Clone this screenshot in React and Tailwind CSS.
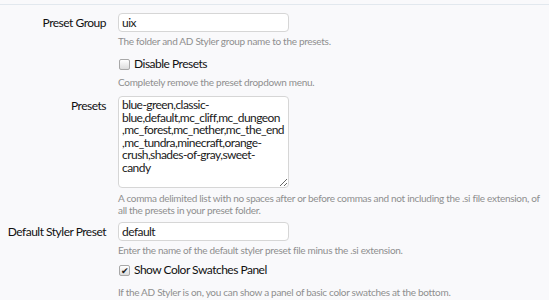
import React from 'react'

const font = { fontFamily: 'Lato, "Open Sans", sans-serif' }

const Row = ({ label, children, className = '' }) => (
  <div className={`flex ${className}`}>
    <div className="w-[106px] shrink-0 text-right whitespace-nowrap text-[12px] tracking-[-0.5px] text-[#111] leading-[19px]">{label}</div>
    <div className="ml-3 flex-1 min-w-0">{children}</div>
  </div>
)

const Desc = ({ children, className = '' }) => (
  <p className={`text-[10px] leading-[12px] tracking-[-0.3px] text-[#8f8f8f] ${className}`}>{children}</p>
)

const Check = ({ checked, label }) => (
  <label className="flex items-center gap-[4px] text-[12px] tracking-[-0.5px] text-[#111] leading-[16px]">
    <span className="ml-[1px] w-[11px] h-[11px] rounded-[2px] border border-[#a8a8a8] bg-gradient-to-b from-white to-[#dcdcdc] flex items-center justify-center text-[9px] leading-none text-[#222]">
      {checked ? '✔' : ''}
    </span>
    {label}
  </label>
)

const fieldCls =
  'block w-[171px] bg-white border border-[#d6d6d6] rounded-[4px] px-[3px] text-[12px] tracking-[-0.55px] text-[#1a1a1a] outline-none'

export default function App() {
  return (
    <div className="w-[549px] h-[300px] overflow-hidden bg-[#f9f9fb]" style={font}>
      <div className="border-t border-[#e2e8ee] mt-[4px]" />

      <Row label="Preset Group" className="mt-[8px]">
        <input defaultValue="uix" className={`${fieldCls} h-[19px]`} />
        <Desc className="mt-[3px]">The folder and AD Styler group name to the presets.</Desc>
      </Row>

      <Row label="" className="mt-[9px]">
        <Check label="Disable Presets" />
        <Desc className="mt-[4px]">Completely remove the preset dropdown menu.</Desc>
      </Row>

      <Row label="Presets" className="mt-[8px]">
        <textarea
          defaultValue={'blue-green,classic-\nblue,default,mc_cliff,mc_dungeon\n,mc_forest,mc_nether,mc_the_end\n,mc_tundra,minecraft,orange-\ncrush,shades-of-gray,sweet-\ncandy'}
          className={`${fieldCls} h-[92px] py-[2px] leading-[12.5px] resize-y whitespace-pre`}
        />
        <Desc className="mt-[4px]">
          A comma delimited list with no spaces after or before commas and not including the .si file extension, of
          <br />
          all the presets in your preset folder.
        </Desc>
      </Row>

      <Row label="Default Styler Preset" className="mt-[6px]">
        <input defaultValue="default" className={`${fieldCls} h-[19px]`} />
        <Desc className="mt-[3px]">Enter the name of the default styler preset file minus the .si extension.</Desc>
      </Row>

      <Row label="" className="mt-[6px]">
        <Check checked label="Show Color Swatches Panel" />
        <Desc className="mt-[8px]">If the AD Styler is on, you can show a panel of basic color swatches at the bottom.</Desc>
      </Row>
    </div>
  )
}
